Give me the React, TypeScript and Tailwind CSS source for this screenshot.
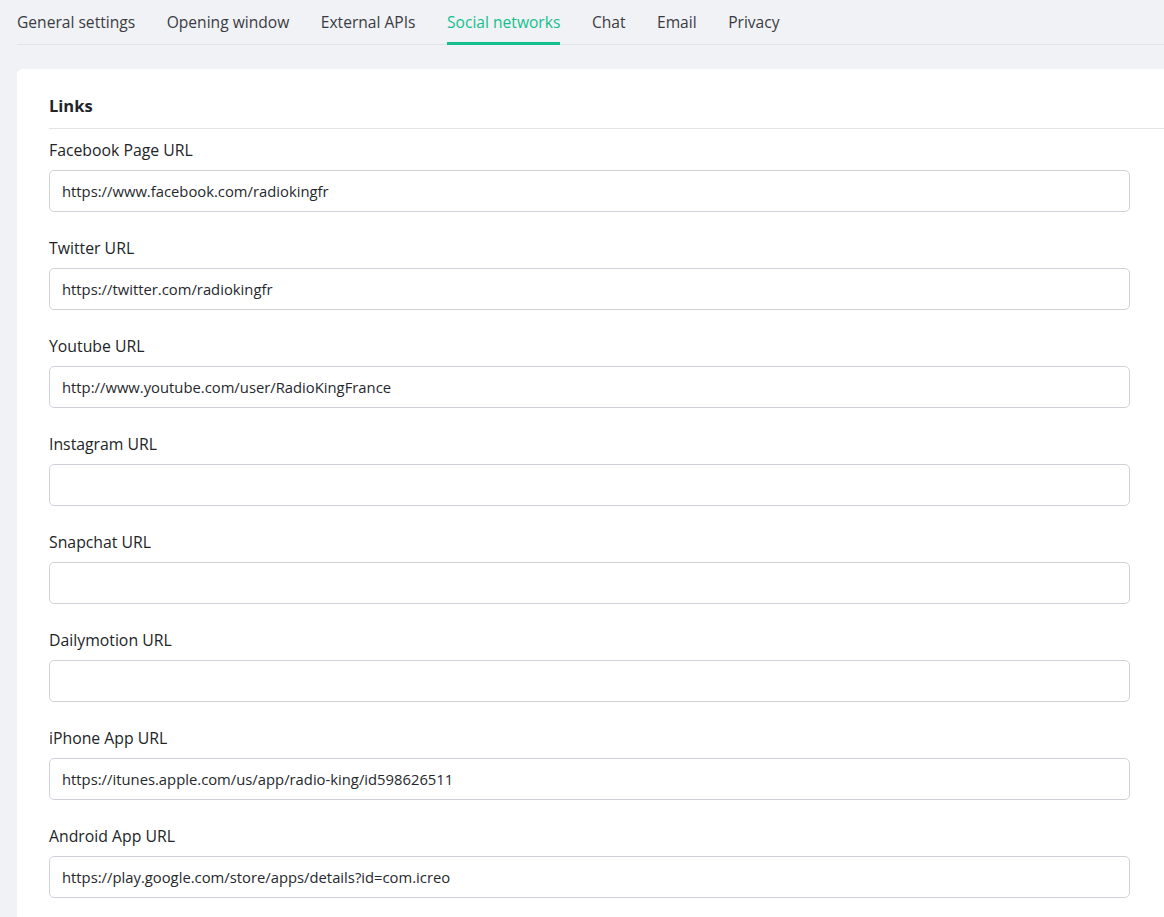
const tabs = [
  'General settings',
  'Opening window',
  'External APIs',
  'Social networks',
  'Chat',
  'Email',
  'Privacy',
]

const fields = [
  { label: 'Facebook Page URL', value: 'https://www.facebook.com/radiokingfr' },
  { label: 'Twitter URL', value: 'https://twitter.com/radiokingfr' },
  { label: 'Youtube URL', value: 'http://www.youtube.com/user/RadioKingFrance' },
  { label: 'Instagram URL', value: '' },
  { label: 'Snapchat URL', value: '' },
  { label: 'Dailymotion URL', value: '' },
  { label: 'iPhone App URL', value: 'https://itunes.apple.com/us/app/radio-king/id598626511' },
  { label: 'Android App URL', value: 'https://play.google.com/store/apps/details?id=com.icreo' },
]

const font = '"Open Sans", "Noto Sans", sans-serif'

export default function App() {
  return (
    <div
      className="h-[917px] w-[1164px] overflow-hidden bg-[#f1f2f6] text-[#2b2d33]"
      style={{ fontFamily: font }}
    >
      <div className="ml-[17px] flex gap-[31.5px] border-b border-[#e1e3e8]">
        {tabs.map((tab) => (
          <div
            key={tab}
            className={
              tab === 'Social networks'
                ? 'relative flex h-[44px] items-center pt-[2px] text-[15.6px] text-[#13bf8d]'
                : 'relative flex h-[44px] items-center pt-[2px] text-[15.6px] text-[#3a3c42]'
            }
          >
            {tab}
            {tab === 'Social networks' && (
              <span className="absolute bottom-[-1px] left-0 right-0 h-[3px] bg-[#13bf8d]" />
            )}
          </div>
        ))}
      </div>

      <div className="ml-[17px] mt-[24px] w-[1200px] rounded-tl-md bg-white pb-10 pl-8">
        <div className="flex h-[60px] items-end border-b border-[#e3e4e8] pb-[10px]">
          <h2 className="text-[16.5px] font-bold leading-[24px] text-[#222428]">Links</h2>
        </div>

        <div className="pt-[10px]">
          {fields.map((field) => (
            <div key={field.label} className="mb-[25px]">
              <label className="mb-[10px] block pt-[1px] text-[15.8px] leading-[20px] text-[#222428]">
                {field.label}
              </label>
              <input
                type="text"
                defaultValue={field.value}
                className="block h-[42px] w-[1081px] rounded-[5px] border border-[#cfd1d8] bg-white px-3 text-[14.8px] text-[#26282d] outline-none"
                style={{ fontFamily: font }}
              />
            </div>
          ))}
        </div>
      </div>
    </div>
  )
}
